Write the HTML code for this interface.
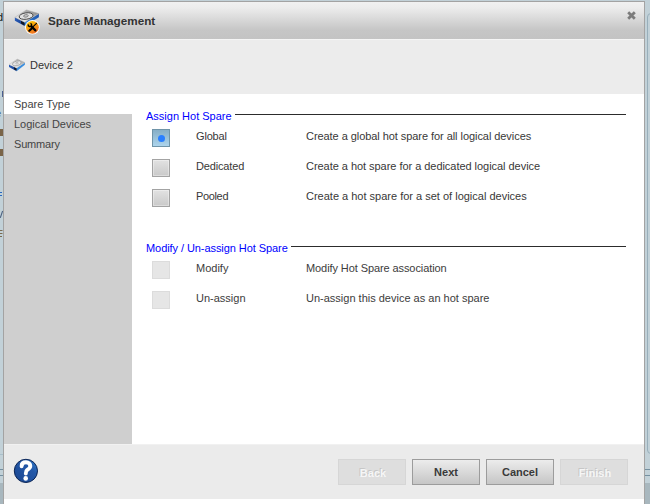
<!DOCTYPE html>
<html><head><meta charset="utf-8">
<style>
*{box-sizing:border-box}
html,body{margin:0;padding:0;width:650px;height:504px;overflow:hidden;background:#c2d1d8;font-family:"Liberation Sans",sans-serif;font-size:11px;color:#383838}
.a{position:absolute;white-space:nowrap}
#dlg{position:absolute;left:3px;top:1px;width:642px;height:520px;border:1px solid #a3a3a3;background:#fff;overflow:hidden}
#hdr{position:absolute;left:0;top:0;width:640px;height:37px;background:linear-gradient(#f1f1f1 0px,#ececec 6px,#c6c6c6 28px,#c3c3c3 37px)}
#dev{position:absolute;left:0;top:37px;width:640px;height:55px;border-top:1px solid #f5f5f5;background:#ececec}
#nav{position:absolute;left:0;top:112px;width:128px;height:330px;background:#cfcfcf}
#ftr{position:absolute;left:0;top:442px;width:640px;height:55px;background:#ebebeb;border-top:1px solid #f1f1f1}
.t{position:absolute;white-space:nowrap;line-height:12px;font-size:11px}
.hd{color:#0000ff}
.rule{position:absolute;height:1px;background:#2c2c2c}
.cb{position:absolute;width:18px;height:18px;border:1px solid #a3a3a3;background:linear-gradient(#e2e2e2,#c9c9c9);box-shadow:inset 0 0 0 1px rgba(255,255,255,.35)}
.cb.sel{box-shadow:none;border-color:#6f94a8;background:linear-gradient(#86aec6,#acd4ec)}
.cb.dis{border-color:#dcdcdc;background:#e6e6e6;box-shadow:none}
.dot{position:absolute;left:5px;top:5px;width:7px;height:7px;border-radius:50%;background:#2a7fff}
.btn{position:absolute;width:68px;height:26px;border:1px solid #9c9c9c;background:linear-gradient(#ececec,#c6c6c6);font-weight:bold;text-align:center;line-height:24px;color:#3a3a3a}
.btn.dis{border-color:#d6d6d6;background:#dedede;color:#f6f6f6;text-shadow:-1px -1px 0 #c6c6c6;padding-left:2px;padding-top:1px}
</style></head><body>
<!-- background fragments -->
<div class="a" style="left:0;top:483px;width:650px;height:21px;background:#a8b7be"></div>
<div class="a" style="left:0;top:469px;width:650px;height:1px;background:#7590a0"></div>
<div class="a" style="left:0;top:475px;width:650px;height:1px;background:#7590a0"></div>
<div class="a" style="left:0;top:454px;width:10px;height:1px;background:#a9bfca"></div>
<div class="a" style="left:647px;top:13px;width:20px;height:441px;border:1px solid #98afbb;border-radius:4px"></div>
<div class="a" style="left:-3px;top:11px;font-size:11px;line-height:12px;color:#111">d</div>
<div class="a" style="left:2px;top:91px;width:1px;height:6px;background:#4a5f90"></div>
<div class="a" style="left:-5px;top:107px;font-size:11px;line-height:12px;color:#4a5a6a">e</div>
<div class="a" style="left:0;top:129px;width:3px;height:7px;background:#7a6448"></div>
<div class="a" style="left:0;top:149px;width:3px;height:7px;background:#7a6448"></div>
<svg class="a" style="left:0;top:186px" width="3" height="56"><path d="M0,6.5 H2 M0,9.5 H2" stroke="#2a68c0" stroke-width="1"/><path d="M0.3,31.8 L2.6,25" stroke="#4a6080" stroke-width="1.1"/><path d="M0,44.5 H2.5 M0,47.5 H2.5 M0,50.5 H2" stroke="#7a6a50" stroke-width="1"/></svg>
<div id="dlg">
  <div id="hdr"></div>
  <div id="dev"></div>
  <div id="nav"></div>
  <div id="ftr"></div>
</div>
<!-- icons -->
<svg class="a" style="left:0;top:0" width="650" height="504" viewBox="0 0 650 504">
 <defs>
  <linearGradient id="gTop" x1="0" y1="1" x2="1" y2="0"><stop offset="0" stop-color="#f8f8f8"/><stop offset=".45" stop-color="#cfcfcf"/><stop offset="1" stop-color="#707070"/></linearGradient>
  <linearGradient id="gTop2" x1="0" y1="1" x2="1" y2="0"><stop offset="0" stop-color="#fafafa"/><stop offset=".5" stop-color="#dadada"/><stop offset="1" stop-color="#888"/></linearGradient>
  <linearGradient id="gL" x1="0" y1="0" x2="1" y2="0"><stop offset="0" stop-color="#2a5cb8"/><stop offset="1" stop-color="#163e8c"/></linearGradient>
  <linearGradient id="gR" x1="0" y1="1" x2="1" y2="0"><stop offset="0" stop-color="#3a8ee0"/><stop offset="1" stop-color="#1c50a8"/></linearGradient>
  <linearGradient id="gOr" x1="0" y1="0" x2="0.6" y2="1"><stop offset="0" stop-color="#ffd000"/><stop offset=".5" stop-color="#f8a010"/><stop offset="1" stop-color="#f07020"/></linearGradient>
  <linearGradient id="gHelp" x1="1" y1="0" x2="0" y2="1"><stop offset="0" stop-color="#2f7fd0"/><stop offset=".35" stop-color="#2358a8"/><stop offset="1" stop-color="#1a4690"/></linearGradient>
 </defs>
 <!-- title disk -->
 <g transform="translate(13,8)">
  <path d="M1.9,9.3 L11.6,14.2 L11.6,17.9 L1.9,12.7 Z" fill="url(#gL)"/>
  <path d="M11.6,14.2 L25.9,5.6 L25.9,9.2 L11.6,17.9 Z" fill="url(#gR)"/>
  <path d="M8,15.6 L11.6,17.4 L11.6,14.6 L8,12.8 Z" fill="#101828"/>
  <path d="M13.4,1.9 L25.9,5.6 L11.6,14.2 L1.9,9.3 Z" fill="url(#gTop)" stroke="#b0b0b0" stroke-width=".5"/>
  <ellipse cx="13.1" cy="8.05" rx="7" ry="3.2" transform="rotate(-8 13.1 8.05)" fill="#e2e2e2" stroke="#3a3a3a" stroke-width=".85"/>
  <ellipse cx="12.9" cy="7.9" rx="2.3" ry="1.2" transform="rotate(-8 12.9 7.9)" fill="#d4d4d4" stroke="#6a6a6a" stroke-width=".8"/>
 </g>
 <!-- badge -->
 <circle cx="32.4" cy="27.3" r="7.3" fill="#fff"/>
 <circle cx="32.4" cy="27.3" r="6.4" fill="url(#gOr)"/>
 <g stroke="#000" fill="none">
  <path d="M31.4,26.4 L35.4,30.4" stroke-width="2.2" stroke-linecap="round"/>
  <path d="M28.3,24.4 A1.7,1.7 0 1 0 30.5,23.3" stroke-width="1.4"/>
  <path d="M36.5,23.4 L32.6,27.2" stroke-width="1.1" stroke-linecap="round"/>
  <path d="M32.3,28 L29.3,30.8" stroke-width="2.2" stroke-linecap="round"/>
 </g>
 <!-- device disk -->
 <g>
  <path d="M9,64.4 L16.6,67.9 L16.6,71.3 L9,67 Z" fill="url(#gL)"/>
  <path d="M16.6,67.9 L24.9,62.5 L24.9,64.8 L16.6,71.3 Z" fill="#3a8ede"/>
  <path d="M14,69.2 L16.6,70.5 L16.6,68.3 L14,67 Z" fill="#101828"/>
  <path d="M17.3,59.1 L24.9,62.5 L16.6,67.9 L9,64.4 Z" fill="url(#gTop2)" stroke="#b8b8b8" stroke-width=".4"/>
  <ellipse cx="16.8" cy="63.4" rx="4.4" ry="2.3" transform="rotate(-14 16.8 63.4)" fill="#e6e6e6" stroke="#8a8a8a" stroke-width=".6"/>
  <ellipse cx="17" cy="63.2" rx="1.4" ry=".8" fill="none" stroke="#9a9a9a" stroke-width=".5"/>
 </g>
 <!-- close X -->
 <path d="M628.2,12.2 L634.8,18.8 M634.8,12.2 L628.2,18.8" stroke="#7c7c7c" stroke-width="2.8"/>
 <!-- help -->
 <circle cx="25.9" cy="470.9" r="11.6" fill="url(#gHelp)" stroke="#0a2454" stroke-width="1"/>
 <path d="M21.6,466.2 C21.6,463.4 23.6,462.3 26,462.3 C28.8,462.3 30.3,464 30.3,466 C30.3,468.2 28.6,469 27.2,469.9 C26.2,470.6 25.8,471.4 25.8,473.6" fill="none" stroke="#fff" stroke-width="3.9" stroke-linecap="round"/>
 <circle cx="25.7" cy="478.4" r="2.3" fill="#fff"/>
</svg>
<!-- title -->
<div class="t" style="left:48px;top:15px;font-size:11.7px;font-weight:bold;color:#333">Spare Management</div>
<div class="t" style="left:30px;top:59px;color:#333">Device 2</div>
<!-- nav -->
<div class="t" style="left:14px;top:98px;color:#444">Spare Type</div>
<div class="t" style="left:14px;top:118px;color:#444">Logical Devices</div>
<div class="t" style="left:14px;top:138px;color:#444;letter-spacing:-0.17px">Summary</div>
<!-- section 1 -->
<div class="t hd" style="left:146px;top:110px">Assign Hot Spare</div>
<div class="rule" style="left:235px;top:114px;width:391px"></div>
<div class="cb sel" style="left:152px;top:129px"><div class="dot"></div></div>
<div class="cb" style="left:152px;top:159px"></div>
<div class="cb" style="left:152px;top:189px"></div>
<div class="t" style="left:196px;top:130px;letter-spacing:-0.17px">Global</div>
<div class="t" style="left:196px;top:160px;letter-spacing:-0.15px">Dedicated</div>
<div class="t" style="left:196px;top:190px;letter-spacing:-0.35px">Pooled</div>
<div class="t" style="left:306px;top:130px;letter-spacing:-0.06px">Create a global hot spare for all logical devices</div>
<div class="t" style="left:306px;top:160px;letter-spacing:-0.04px">Create a hot spare for a dedicated logical device</div>
<div class="t" style="left:306px;top:190px">Create a hot spare for a set of logical devices</div>
<!-- section 2 -->
<div class="t hd" style="left:146px;top:242px;letter-spacing:-0.07px">Modify / Un-assign Hot Spare</div>
<div class="rule" style="left:291px;top:246px;width:335px"></div>
<div class="cb dis" style="left:152px;top:261px"></div>
<div class="cb dis" style="left:152px;top:291px"></div>
<div class="t" style="left:196px;top:262px;color:#3c3c3c">Modify</div>
<div class="t" style="left:196px;top:292px;color:#3c3c3c">Un-assign</div>
<div class="t" style="left:306px;top:262px;color:#3c3c3c"><span style="letter-spacing:-0.09px">Modify Hot Spare association</span></div>
<div class="t" style="left:306px;top:292px;color:#3c3c3c">Un-assign this device as an hot spare</div>
<!-- buttons -->
<div class="btn dis" style="left:338px;top:459px">Back</div>
<div class="btn" style="left:412px;top:459px">Next</div>
<div class="btn" style="left:486px;top:459px">Cancel</div>
<div class="btn dis" style="left:560px;top:459px">Finish</div>
</body></html>
